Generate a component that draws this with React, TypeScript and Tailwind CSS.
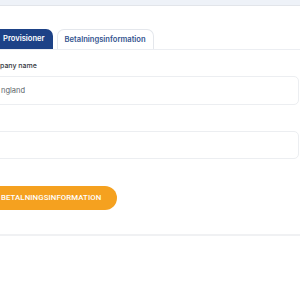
export default function App() {
  return (
    <div className="w-[300px] h-[300px] bg-white overflow-hidden font-['Inter',sans-serif]">
      {/* top strip */}
      <div className="h-[6px] bg-[#eef2f8] border-b border-[#e2e5ea]" />

      {/* tabs */}
      <div className="mt-[23px] flex items-end gap-[4px] border-b border-[#eceef2]">
        <button className="-ml-[6px] h-[20px] pl-[9px] pr-[8px] rounded-t-[7px] bg-[#1d4287] text-white text-[7.6px] font-semibold">
          Provisioner
        </button>
        <button className="h-[20px] px-[7px] rounded-t-[7px] border border-b-0 border-[#e4e7ec] text-[#34548f] text-[7.6px] font-semibold">
          Betalningsinformation
        </button>
      </div>

      {/* form */}
      <div className="flex flex-col">
        <label className="mt-[11px] h-[9px] leading-[9px] text-[7px] font-medium text-[#333842]">pany name</label>
        <div className="mt-[6px] -ml-[10px] w-[309px] h-[29px] rounded-[5px] border border-[#eceef1] flex items-center pl-[10px] text-[7.5px] text-[#5a5f67]">
          ngland
        </div>
        <div className="mt-[26px] -ml-[10px] w-[309px] h-[28px] rounded-[5px] border border-[#eceef1]" />
        <div className="mt-[23px]">
          <button className="-ml-[12px] h-[24px] pl-[13px] pr-[16px] rounded-full bg-[#f5a11f] text-white text-[7.8px] font-medium font-['Roboto',sans-serif] tracking-[0.1px]">
            BETALNINGSINFORMATION
          </button>
        </div>
        <div className="mt-[24px] h-[2px] bg-[#f0f1f3]" />
      </div>
    </div>
  );
}
